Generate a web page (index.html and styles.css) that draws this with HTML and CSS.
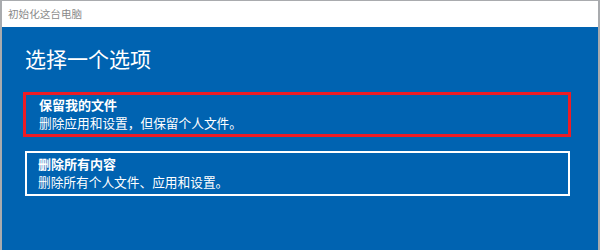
FILE: index.html
```html
<!DOCTYPE html>
<html lang="zh-CN">
<head>
<meta charset="utf-8">
<title>初始化这台电脑</title>
<link rel="stylesheet" href="styles.css">
</head>
<body>
<div class="frame">
  <div class="titlebar">初始化这台电脑</div>
  <div class="content">
    <h1 class="heading">选择一个选项</h1>
    <div class="option option-marked">
      <div class="option-title">保留我的文件</div>
      <div class="option-desc">删除应用和设置，但保留个人文件。</div>
    </div>
    <div class="option option-plain">
      <div class="option-title">删除所有内容</div>
      <div class="option-desc">删除所有个人文件、应用和设置。</div>
    </div>
  </div>
</div>
</body>
</html>
```

FILE: styles.css
```css
html, body {
  margin: 0;
  padding: 0;
}
body {
  width: 600px;
  height: 250px;
  overflow: hidden;
  font-family: "Noto Sans CJK SC", "Noto Sans", sans-serif;
}
.frame {
  box-sizing: border-box;
  width: 600px;
  height: 250px;
  padding: 1px 2px 0 2px;
  background: #a9abae;
  display: flex;
  flex-direction: column;
}
.titlebar {
  height: 26px;
  background: #ffffff;
  color: #8a8a8a;
  font-size: 10.6px;
  line-height: 26px;
  padding-left: 6px;
  flex: none;
}
.content {
  flex: 1;
  background: #0063b1;
  padding: 18px 27px 0 21px;
}
.heading {
  margin: 0 0 21px 2px;
  font-size: 21px;
  font-weight: normal;
  line-height: 26px;
  color: #ffffff;
}
.option {
  color: #ffffff;
  font-size: 13px;
  line-height: 18px;
}
.option-title {
  font-weight: bold;
}
.option-desc {
  font-size: 12.7px;
}
.option-marked {
  border: 3px solid #ee1c25;
  padding: 1px 13px 2px 13px;
  margin-bottom: 14px;
}
.option-plain {
  border: 2px solid #ffffff;
  margin: 0 1px 0 2px;
  padding: 2px 11px 3px 11px;
}
```
